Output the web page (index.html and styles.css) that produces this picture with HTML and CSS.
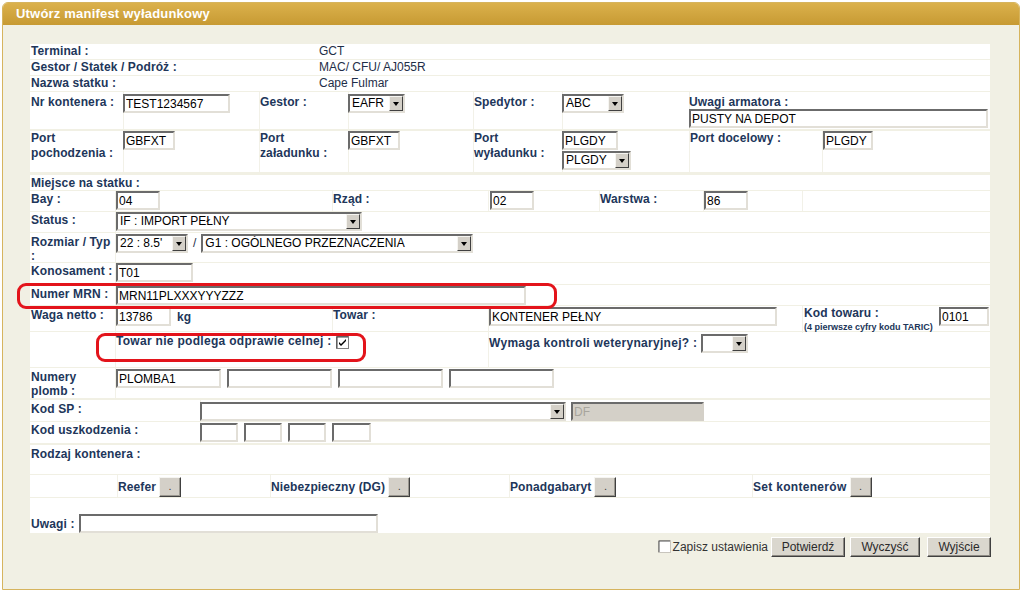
FILE: index.html
```html
<!DOCTYPE html>
<html lang="pl">
<head>
<meta charset="utf-8">
<title>Utwórz manifest wyładunkowy</title>
<link rel="stylesheet" href="styles.css">
</head>
<body>
<div class="panel">
  <div class="panel-title">Utwórz manifest wyładunkowy</div>
  <div class="panel-body">
    <div class="form">
      <div class="info-row first"><span class="lbl">Terminal :</span><span class="val">GCT</span></div>
      <div class="info-row"><span class="lbl">Gestor / Statek / Podróż :</span><span class="val">MAC/ CFU/ AJ055R</span></div>
      <div class="info-row"><span class="lbl">Nazwa statku :</span><span class="val">Cape Fulmar</span></div>

      <div class="row g8 r-kont">
        <div class="c lbl">Nr kontenera :</div>
        <div class="c fld"><input class="inp w107" value="TEST1234567"></div>
        <div class="c lbl">Gestor :</div>
        <div class="c fld"><span class="sel w57"><span class="sv">EAFR</span><span class="sb"></span></span></div>
        <div class="c lbl">Spedytor :</div>
        <div class="c fld"><span class="sel w62"><span class="sv">ABC</span><span class="sb"></span></span></div>
        <div class="c span2 uwagi-arm"><div class="lbl">Uwagi armatora :</div><input class="inp w299" value="PUSTY NA DEPOT"></div>
      </div>

      <div class="row g8 r-port">
        <div class="c lbl">Port<br>pochodzenia :</div>
        <div class="c fld"><input class="inp w52" value="GBFXT"></div>
        <div class="c lbl">Port<br>załadunku :</div>
        <div class="c fld"><input class="inp w52" value="GBFXT"></div>
        <div class="c lbl">Port<br>wyładunku :</div>
        <div class="c fld stack"><input class="inp w56" value="PLGDY"><span class="sel w69"><span class="sv">PLGDY</span><span class="sb"></span></span></div>
        <div class="c lbl">Port docelowy :</div>
        <div class="c fld pl1"><input class="inp w50" value="PLGDY"></div>
      </div>

      <div class="row g7 r-miejsce">
        <div class="c lbl span7">Miejsce na statku :</div>
      </div>

      <div class="row g7 r-bay">
        <div class="c lbl">Bay :</div>
        <div class="c fld pl1"><input class="inp w44" value="04"></div>
        <div class="c lbl">Rząd :</div>
        <div class="c fld pl2"><input class="inp w44" value="02"></div>
        <div class="c lbl">Warstwa :</div>
        <div class="c fld pl1"><input class="inp w44" value="86"></div>
        <div class="c"></div>
      </div>

      <div class="row g7 r-status">
        <div class="c lbl">Status :</div>
        <div class="c fld pl1 span6"><span class="sel w246"><span class="sv">IF : IMPORT PEŁNY</span><span class="sb"></span></span></div>
      </div>

      <div class="row g7 r-rozm">
        <div class="c lbl">Rozmiar / Typ<br>:</div>
        <div class="c fld pl1 span6 inline"><span class="sel w72"><span class="sv">22 : 8.5'</span><span class="sb"></span></span><span class="slash">/</span><span class="sel w272"><span class="sv">G1 : OGÓLNEGO PRZEZNACZENIA</span><span class="sb"></span></span></div>
      </div>

      <div class="row g7 r-kono">
        <div class="c lbl">Konosament :</div>
        <div class="c fld pl1 span6"><input class="inp w77" value="T01"></div>
      </div>

      <div class="row g7 r-mrn">
        <div class="c lbl">Numer MRN :</div>
        <div class="c fld pl1 span6"><input class="inp w410" value="MRN11PLXXXYYYZZZ"></div>
      </div>

      <div class="row g7 r-waga">
        <div class="c lbl">Waga netto :</div>
        <div class="c fld pl1 inline"><input class="inp w55" value="13786"><span class="unit">kg</span></div>
        <div class="c lbl">Towar :</div>
        <div class="c fld pl1 span3"><input class="inp w288" value="KONTENER PEŁNY"></div>
        <div class="c kod-towaru">
          <div class="kod-lbl"><div class="lbl">Kod towaru :</div><div class="hint">(4 pierwsze cyfry kodu TARIC)</div></div>
          <input class="inp w50" value="0101">
        </div>
      </div>

      <div class="row g7 r-celna">
        <div class="c"></div>
        <div class="c span2 inline celna"><span class="lbl wide">Towar nie podlega odprawie celnej :</span><span class="chk checked"><svg viewBox="0 0 13 13" width="13" height="13"><rect x="0.5" y="0.5" width="12" height="12" fill="#fff" stroke="#808080"/><path d="M1 12V1h11" fill="none" stroke="#404040"/><path d="M3 6l2 2 5-5v2l-5 5-2-2z" fill="#000"/></svg></span></div>
        <div class="c span4 inline wet"><span class="lbl wide">Wymaga kontroli weterynaryjnej? :</span><span class="sel w47"><span class="sv"></span><span class="sb"></span></span></div>
      </div>

      <div class="row g7 r-plomb">
        <div class="c lbl">Numery<br>plomb :</div>
        <div class="c fld pl1 span6 plomby"><input class="inp w105" value="PLOMBA1"><input class="inp w105" value=""><input class="inp w105" value=""><input class="inp w105" value=""></div>
      </div>

      <div class="row g2 r-kodsp">
        <div class="c lbl">Kod SP :</div>
        <div class="c fld inline gap5"><span class="sel w366"><span class="sv"></span><span class="sb"></span></span><input class="inp w133 dis" value="DF" disabled></div>
      </div>

      <div class="row g2 r-uszk">
        <div class="c lbl">Kod uszkodzenia :</div>
        <div class="c fld inline gap6"><input class="inp w38" value=""><input class="inp w38" value=""><input class="inp w38" value=""><input class="inp w39" value=""></div>
      </div>

      <div class="row r-rodzaj">
        <div class="c lbl">Rodzaj kontenera :</div>
      </div>

      <div class="row g5 r-btns">
        <div class="c"></div>
        <div class="c typ"><span class="lbl">Reefer</span><button class="dot">.</button></div>
        <div class="c typ"><span class="lbl">Niebezpieczny (DG)</span><button class="dot">.</button></div>
        <div class="c typ"><span class="lbl">Ponadgabaryt</span><button class="dot">.</button></div>
        <div class="c typ"><span class="lbl wide">Set kontenerów</span><button class="dot">.</button></div>
      </div>

      <div class="row r-uwagi">
        <span class="lbl">Uwagi :</span><input class="inp w299" value="">
      </div>
    </div>

    <div class="actions">
      <span class="chk"><svg viewBox="0 0 13 13" width="13" height="13"><rect x="0.5" y="0.5" width="12" height="12" fill="#fff" stroke="#c8c5bd"/><path d="M1 12V1h11" fill="none" stroke="#505050"/></svg></span>
      <span class="save-lbl">Zapisz ustawienia</span>
      <button class="btn b-potw">Potwierdź</button>
      <button class="btn b-wycz">Wyczyść</button>
      <button class="btn b-wyj">Wyjście</button>
    </div>

    <div class="mark mark-mrn"></div>
    <div class="mark mark-celna"></div>
  </div>
</div>
</body>
</html>
```

FILE: styles.css
```css
* { box-sizing: border-box; }

html, body {
  margin: 0;
  padding: 0;
  background: #ffffff;
}

body {
  font-family: "Liberation Sans", Arial, sans-serif;
  font-size: 12px;
  color: #1e2e48;
}

.panel {
  margin: 2px 4px 0 2px;
  height: 588px;
  border: 1px solid #d6b45e;
  border-radius: 6px 6px 0 0;
  background: #f1f0e4;
}

.panel-title {
  height: 22px;
  line-height: 22px;
  padding-left: 13px;
  background: linear-gradient(#dbb14c, #c79a33);
  color: #ffffff;
  font-weight: bold;
  font-size: 13px;
  letter-spacing: 0.2px;
  border-radius: 5px 5px 0 0;
}

.panel-body {
  position: relative;
  padding: 19px 29px 0 27px;
}

.form {
  width: 960px;
}

.lbl {
  font-weight: bold;
  color: #21365a;
  line-height: 14px;
  white-space: nowrap;
  letter-spacing: 0.12px;
}
.lbl.wide { letter-spacing: 0.3px; }

.val {
  color: #1e2e48;
}

/* info rows */
.info-row {
  display: grid;
  grid-template-columns: 289px 1fr;
  height: 15px;
  line-height: 15px;
  background: #ffffff;
  margin-top: 1px;
}
.info-row.first { margin-top: 0; }
.info-row .lbl { line-height: 15px; padding-left: 1px; }

/* generic rows */
.row {
  display: grid;
  background: #ffffff;
  margin-top: 1px;
  align-items: start;
}
.c { height: 100%; }
.c + .c { box-shadow: inset 1px 0 #f2f1e8; }
.c.lbl { padding-left: 1px; }

.g8 { grid-template-columns: 93px 136px 89px 125px 89px 127px 133px 168px; }
.g7 { grid-template-columns: 85px 217px 156px 111px 104px 99px 188px; }
.g2 { grid-template-columns: 170px 790px; }
.g5 { grid-template-columns: 87px 153px 239px 243px 238px; }

.span2 { grid-column: span 2; }
.span3 { grid-column: span 3; }
.span4 { grid-column: span 4; }
.span6 { grid-column: span 6; }
.span7 { grid-column: span 7; }

.pl1 { padding-left: 1px; }
.pl2 { padding-left: 2px; }

.inline { display: flex; align-items: flex-start; }
.gap5 { gap: 5px; }
.gap6 { gap: 6px; }

/* inputs */
.inp {
  display: block;
  height: 19px;
  margin: 0;
  padding: 0 1px;
  border: 2px solid;
  border-color: #6b6b6b #e2dfd7 #e2dfd7 #6b6b6b;
  background: #ffffff;
  font-family: "Liberation Sans", Arial, sans-serif;
  font-size: 12px;
  color: #000000;
  outline: none;
}
.inp.dis {
  background: #d4d0c8;
  color: #a8a59d;
  border-color: #6b6b6b #d4d0c8 #d4d0c8 #6b6b6b;
}

.w38 { width: 38px; }
.w39 { width: 39px; }
.w44 { width: 44px; }
.w47 { width: 47px; }
.w50 { width: 50px; }
.w52 { width: 52px; }
.w55 { width: 55px; }
.w56 { width: 56px; }
.w57 { width: 57px; }
.w62 { width: 62px; }
.w69 { width: 69px; }
.w72 { width: 72px; }
.w77 { width: 77px; }
.w105 { width: 105px; }
.w107 { width: 107px; }
.w133 { width: 133px; }
.w246 { width: 246px; }
.w272 { width: 272px; }
.w288 { width: 288px; }
.w299 { width: 299px; }
.w366 { width: 366px; }
.w410 { width: 410px; }

/* fake classic select */
.sel {
  display: flex;
  align-items: center;
  height: 19px;
  border: 2px solid;
  border-color: #6b6b6b #e2dfd7 #e2dfd7 #6b6b6b;
  background: #ffffff;
  flex: none;
}
.sel .sv {
  flex: 1;
  padding-left: 2px;
  line-height: 15px;
  white-space: nowrap;
  overflow: hidden;
  color: #000000;
}
.sel .sb {
  flex: none;
  width: 14px;
  height: 15px;
  background: #d4d0c8;
  border: 1px solid;
  border-color: #f6f5f1 #404040 #404040 #f6f5f1;
  display: flex;
  align-items: center;
  justify-content: center;
}
.sel .sb::after {
  content: "";
  border-left: 3.5px solid transparent;
  border-right: 3.5px solid transparent;
  border-top: 4px solid #000000;
}

/* checkbox */
.chk {
  display: inline-block;
  width: 13px;
  height: 13px;
  flex: none;
}
.chk svg { display: block; }

/* row specifics */
.r-kont { height: 37px; margin-top: 1px; }
.r-kont .c.lbl { padding-top: 3px; }
.r-kont .fld { padding-top: 2px; }
.uwagi-arm .lbl { padding-top: 3px; padding-left: 0; }

.r-port { height: 41px; margin-top: 2px; }
.r-port .c.lbl { line-height: 15px; }
.stack { display: flex; flex-direction: column; gap: 1px; }

.r-miejsce { height: 15px; margin-top: 3px; }
.r-miejsce .lbl { line-height: 16px; }

.r-bay { height: 20px; }
.r-bay .c.lbl { padding-top: 1px; }

.r-status { height: 20px; }
.r-status .c.lbl { padding-top: 1px; }

.r-rozm { height: 29px; }
.r-rozm .c.lbl { padding-top: 2px; }
.r-rozm .fld { padding-top: 1px; }
.slash { padding: 2px 5px 0 5px; line-height: 14px; color: #1e2e48; }

.r-kono { height: 21px; }
.r-kono .c.lbl { padding-top: 1px; }

.r-mrn { height: 20px; }
.r-mrn .c.lbl { padding-top: 2px; }
.r-mrn .fld { padding-top: 1px; }

.r-waga { height: 25px; }
.r-waga .c.lbl { padding-top: 2px; }
.r-waga .fld { padding-top: 1px; }
.unit { font-weight: bold; color: #21365a; padding: 3px 0 0 6px; line-height: 14px; }
.kod-towaru {
  display: flex;
  justify-content: space-between;
  padding: 0 1px 0 2px;
}
.kod-towaru .inp { margin-top: 1px; }
.hint {
  font-size: 9px;
  font-weight: bold;
  color: #21365a;
  line-height: 11px;
  margin-top: 2px;
  white-space: nowrap;
}

.r-celna { height: 35px; }
.celna { padding: 2px 0 0 1px; gap: 4px; }
.celna .chk { margin-top: 2px; }
.wet { padding: 2px 0 0 1px; gap: 4px; }
.wet .lbl { padding-top: 2px; }

.r-plomb { height: 30px; }
.r-plomb .c.lbl { padding-top: 2px; }
.r-plomb .fld { padding-top: 1px; }
.plomby { display: flex; gap: 6px; }

.r-kodsp { height: 21px; margin-top: 2px; }
.r-kodsp .c.lbl { padding-top: 2px; }
.r-kodsp .fld { padding-top: 2px; }

.r-uszk { height: 21px; }
.r-uszk .c.lbl { padding-top: 1px; }
.r-uszk .fld { padding-top: 1px; }

.r-rodzaj { height: 29px; margin-top: 2px; }
.r-rodzaj .c.lbl { padding-top: 2px; }

.r-btns { height: 22px; }
.typ { display: flex; align-items: flex-start; gap: 3px; padding: 2px 0 0 1px; }
.typ .lbl { padding-top: 3px; }
.dot {
  width: 22px;
  height: 20px;
  margin: 0;
  padding: 0 0 2px 0;
  border: 1px solid;
  border-color: #f6f5f1 #404040 #404040 #f6f5f1;
  box-shadow: inset -1px -1px #9a978f;
  background: #d4d0c8;
  font-family: "Liberation Sans", Arial, sans-serif;
  font-size: 11px;
  color: #444444;
  line-height: 14px;
}

.r-uwagi {
  height: 35px;
  display: flex;
  align-items: flex-start;
  padding: 16px 0 0 1px;
  gap: 4px;
}
.r-uwagi .lbl { padding-top: 3px; }

/* bottom actions */
.actions {
  display: flex;
  justify-content: flex-end;
  align-items: center;
  width: 961px;
  margin-top: 4px;
  height: 20px;
}
.actions .chk { margin-right: 2px; margin-top: -2px; }
.save-lbl { color: #333333; margin-right: 3px; }
.btn {
  height: 20px;
  margin: 0;
  padding: 0;
  border: 1px solid;
  border-color: #ffffff #404040 #404040 #ffffff;
  box-shadow: inset -1px -1px #8d8a83;
  background: #dad7ce;
  font-family: "Liberation Sans", Arial, sans-serif;
  font-size: 12px;
  color: #2a2a2a;
}
.b-potw { width: 74px; }
.b-wycz { width: 70px; margin-left: 5px; }
.b-wyj { width: 64px; margin-left: 7px; }

/* red annotation marks */
.mark {
  position: absolute;
  border: 3px solid #e3141b;
  border-radius: 9px;
  pointer-events: none;
}
.mark-mrn { left: 14px; top: 258px; width: 540px; height: 26px; }
.mark-celna { left: 93px; top: 308px; width: 270px; height: 29px; }
```
